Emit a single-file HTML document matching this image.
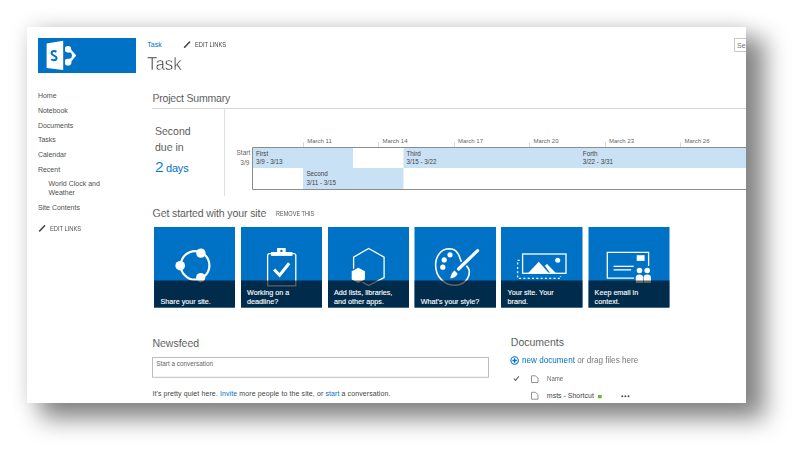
<!DOCTYPE html>
<html><head><meta charset="utf-8">
<style>
html,body{margin:0;padding:0;}
body{width:800px;height:457px;background:#fff;position:relative;overflow:hidden;font-family:"Liberation Sans",sans-serif;color:#444;}
#sh{position:absolute;left:41px;top:38px;width:724px;height:381px;background:rgba(0,0,0,.46);filter:blur(11.5px);}
#page{position:absolute;left:27px;top:27px;width:719px;height:376px;background:#fff;box-shadow:0 0 20px rgba(0,0,0,.11);}
.t{position:absolute;white-space:nowrap;line-height:1;}
.a{position:absolute;}
.nav{font-size:7px;color:#505050;}
.h2{font-size:10.5px;color:#444;-webkit-text-stroke:0.1px #fff;}
.tt{position:absolute;color:#fff;font-weight:normal;font-size:7.2px;line-height:8.8px;white-space:nowrap;letter-spacing:0px;-webkit-text-stroke:0.12px #fff;}
.g{font-size:6px;color:#444;}
svg{position:absolute;left:0;top:0;}
</style></head><body>
<div id="sh"></div>
<div id="page"></div>

<svg width="800" height="457" viewBox="0 0 800 457">
  <!-- logo -->
  <rect x="38" y="38" width="98" height="35" fill="#0072c6"/>
  <path d="M67.8,46 L76.3,55.6 L67.8,65.5 Z" fill="#fff"/>
  <circle cx="68.6" cy="55.6" r="3.3" fill="#0072c6"/>
  <circle cx="68" cy="49.2" r="3.2" fill="#fff"/>
  <circle cx="68" cy="62.2" r="3.4" fill="#fff"/>
  <rect x="63.2" y="40" width="1.8" height="31" fill="#0072c6"/>
  <polygon points="46.6,43.4 63.2,40.8 63.2,70.1 46.6,67.9" fill="#fff"/>
  <path d="M56.4,51.9 C55.6,51.3 54.8,51.1 54,51.1 C52.5,51.1 51.6,52 51.6,53.2 C51.6,55.9 56.6,55.3 56.6,58.1 C56.6,59.5 55.5,60.2 54,60.2 C53,60.2 52,59.9 51.3,59.3" fill="none" stroke="#0072c6" stroke-width="2"/>
  <!-- pencils -->
  <line x1="184.6" y1="47.2" x2="189.6" y2="42" stroke="#444" stroke-width="1.6" stroke-linecap="round"/>
  <line x1="39.6" y1="231" x2="44.6" y2="225.8" stroke="#444" stroke-width="1.6" stroke-linecap="round"/>

  <!-- project summary lines -->
  <rect x="152" y="108" width="594" height="1" fill="#d6d6d6"/>
  <rect x="224" y="109" width="1" height="87" fill="#e0e0e0"/>

  <!-- gantt -->
  <rect x="253" y="148" width="100" height="20" fill="#c9e1f5"/>
  <rect x="303" y="168" width="100.5" height="21" fill="#c9e1f5"/>
  <rect x="403.5" y="148" width="342.5" height="20" fill="#c9e1f5"/>
  <path d="M746 147.5 H252.5 V189.5 H746" fill="none" stroke="#8c8c8c" stroke-width="1"/>
  <g fill="#d9d9d9">
    <rect x="303" y="142" width="1" height="5"/>
    <rect x="378" y="142" width="1" height="5"/>
    <rect x="454" y="142" width="1" height="5"/>
    <rect x="529" y="142" width="1" height="5"/>
    <rect x="605" y="142" width="1" height="5"/>
    <rect x="680" y="142" width="1" height="5"/>
  </g>

  <!-- tiles -->
  <g fill="#0072c6">
    <rect x="154" y="227" width="81" height="80.6"/>
    <rect x="241" y="227" width="81" height="80.6"/>
    <rect x="328" y="227" width="81" height="80.6"/>
    <rect x="414.5" y="227" width="81.5" height="80.6"/>
    <rect x="501" y="227" width="81.5" height="80.6"/>
    <rect x="588.5" y="227" width="81" height="80.6"/>
  </g>
  <!-- icon 1 share -->
  <circle cx="195.1" cy="265.4" r="14.3" fill="none" stroke="#fff" stroke-width="2.2"/>
  <g fill="#fff">
    <circle cx="200.9" cy="253.1" r="4.7"/>
    <circle cx="180.2" cy="265.7" r="4.8"/>
    <circle cx="200.7" cy="277.6" r="4.6"/>
  </g>
  <!-- icon 2 clipboard -->
  <path d="M267.6,285.8 V255.5 Q267.6,253.6 269.5,253.6 H293.8 Q295.8,253.6 295.8,255.5 V285.8 Z" fill="none" stroke="#fff" stroke-width="1.3"/>
  <rect x="271.1" y="252" width="21.3" height="3.9" fill="#fff"/>
  <rect x="277.1" y="248" width="8.6" height="4.5" fill="#fff"/>
  <circle cx="281.4" cy="250.9" r="1.2" fill="#0072c6"/>
  <polyline points="274.1,269.5 279.6,275.2 289.2,263.2" fill="none" stroke="#fff" stroke-width="3"/>
  <!-- icon 3 hexagon -->
  <polygon points="368.7,248.5 384.1,257.1 384.1,277.5 368.7,285.5 353.6,277.5 353.6,257.1" fill="none" stroke="#fff" stroke-width="1.3"/>
  <polygon points="358.3,267 365.6,271 365.6,279.8 358.3,283.8 351,279.8 351,271" fill="#fff" stroke="#0072c6" stroke-width="1.4"/>
  <!-- icon 4 palette -->
  <path d="M457.8,253.6 C456,249.5 452,248.8 448.5,248.8 C440.5,249.2 435.6,257 435.6,265 C435.6,277.5 445,285.3 455,285.3 C463,285.3 469.3,279.5 469.3,271.8 C469.3,265.5 463.5,265 461.3,261.5 C460,259.3 459.8,256 457.8,253.6 Z" fill="none" stroke="#fff" stroke-width="1.6"/>
  <g fill="#fff">
    <circle cx="450" cy="254.8" r="2.6"/>
    <circle cx="444.2" cy="259.9" r="2.6"/>
    <circle cx="442.8" cy="267.2" r="2.6"/>
  </g>
  <line x1="477.6" y1="250.6" x2="458.5" y2="269" stroke="#0072c6" stroke-width="6" stroke-linecap="round"/>
  <line x1="477.6" y1="250.6" x2="458.5" y2="269" stroke="#fff" stroke-width="3.2" stroke-linecap="round"/>
  <path d="M454.5,270.5 L457.5,273.5 C457,276.5 453.5,278.3 450.3,278.3 C450.8,275 452,272 454.5,270.5Z" fill="#fff"/>
  <!-- icon 5 brand -->
  <rect x="522.6" y="254" width="43.4" height="19.3" fill="none" stroke="#fff" stroke-width="1.3"/>
  <polygon points="528.2,273 538.8,261.8 548.7,273" fill="#fff"/>
  <polygon points="544.8,265.8 547.1,264 555.8,273 550.2,273" fill="#fff"/>
  <circle cx="557.7" cy="260.2" r="2.5" fill="#fff"/>
  <path d="M519.6,260.3 H517.6 V278.3 H560.5 V276" fill="none" stroke="#fff" stroke-width="1.3" stroke-dasharray="2,2.3"/>
  <!-- icon 6 email -->
  <path d="M648.6,266.1 V252.3 H607.3 V278.1 H634.1" fill="none" stroke="#fff" stroke-width="1.3"/>
  <rect x="636.7" y="255.2" width="7.9" height="5.7" fill="#fff"/>
  <rect x="613.6" y="265.7" width="20.1" height="1.3" fill="#fff"/>
  <rect x="613.6" y="269.2" width="17.5" height="1.3" fill="#fff"/>
  <g fill="#fff">
    <circle cx="639.5" cy="270.5" r="2.8"/>
    <circle cx="647.2" cy="270.5" r="2.8"/>
    <path d="M635.8,283 V277.5 C635.8,275.5 637.3,274.6 639.5,274.6 C641.7,274.6 643,275.5 643,277.5 V283Z"/>
    <path d="M643.6,283 V277.5 C643.6,275.5 645,274.6 647.2,274.6 C649.4,274.6 650.9,275.5 650.9,277.5 V283Z"/>
  </g>
  <!-- bands -->
  <g fill="rgba(0,0,0,0.62)">
    <rect x="154" y="280.5" width="81" height="27.1"/>
    <rect x="241" y="280.5" width="81" height="27.1"/>
    <rect x="328" y="280.5" width="81" height="27.1"/>
    <rect x="414.5" y="280.5" width="81.5" height="27.1"/>
    <rect x="501" y="280.5" width="81.5" height="27.1"/>
    <rect x="588.5" y="280.5" width="81" height="27.1"/>
  </g>

  <!-- newsfeed box -->
  <rect x="152.5" y="357.5" width="336" height="19.8" fill="none" stroke="#bdbdbd" stroke-width="1"/>

  <!-- documents icons -->
  <circle cx="514.6" cy="360.5" r="3.7" fill="none" stroke="#0072c6" stroke-width="1.1"/>
  <path d="M512.4,360.5 H516.8 M514.6,358.3 V362.7" stroke="#0072c6" stroke-width="1.4"/>
  <polyline points="513.8,378.6 515.6,380.4 518.8,376.4" fill="none" stroke="#666" stroke-width="1.1"/>
  <path d="M531.5,375.8 H535.5 L538,378.3 V382.5 H531.5 Z" fill="none" stroke="#888" stroke-width="0.9"/>
  <path d="M531.5,392.3 H535.5 L538,394.8 V399.2 H531.5 Z" fill="none" stroke="#888" stroke-width="0.9"/>
  <rect x="598" y="395" width="3.7" height="3.3" fill="#6cb33f"/>
  <g fill="#444">
    <circle cx="622.3" cy="396.3" r="0.95"/>
    <circle cx="625.4" cy="396.3" r="0.95"/>
    <circle cx="628.5" cy="396.3" r="0.95"/>
  </g>

  <!-- search -->
  <path d="M746,38.5 H734.5 V51.5 H746" fill="none" stroke="#c6c6c6" stroke-width="1"/>
</svg>


<!-- top header -->
<div class="t" style="left:147.3px;top:41px;font-size:7px;color:#0072c6;">Task</div>
<div class="t" style="left:194.7px;top:41.1px;font-size:7px;color:#444;transform:scaleX(0.82);transform-origin:0 0;">EDIT LINKS</div>
<div class="t" style="left:147px;top:54.2px;font-size:19px;color:#333;-webkit-text-stroke:0.5px #fff;transform:scaleX(0.89);transform-origin:0 0;">Task</div>

<!-- left nav -->
<div class="t nav" style="left:37.9px;top:92.2px;">Home</div>
<div class="t nav" style="left:37.9px;top:106.7px;">Notebook</div>
<div class="t nav" style="left:37.9px;top:121.5px;">Documents</div>
<div class="t nav" style="left:37.9px;top:135.7px;">Tasks</div>
<div class="t nav" style="left:37.9px;top:150.5px;">Calendar</div>
<div class="t nav" style="left:37.9px;top:165.5px;">Recent</div>
<div class="t nav" style="left:48.6px;top:179.8px;">World Clock and</div>
<div class="t nav" style="left:48.6px;top:189.1px;">Weather</div>
<div class="t nav" style="left:37.9px;top:203.9px;">Site Contents</div>
<div class="t nav" style="left:50px;top:225.3px;transform:scaleX(0.82);transform-origin:0 0;">EDIT LINKS</div>

<!-- project summary -->
<div class="t h2" style="left:152.5px;top:93.4px;letter-spacing:-0.2px;">Project Summary</div>
<div class="t h2" style="left:155px;top:126.1px;">Second</div>
<div class="t h2" style="left:155px;top:141.8px;">due in</div>
<div class="t" style="left:155px;top:158.6px;font-size:15.5px;color:#0072c6;-webkit-text-stroke:0.15px #fff;">2</div>
<div class="t" style="left:166px;top:162.8px;font-size:11px;color:#0072c6;letter-spacing:-0.2px;">days</div>

<!-- gantt labels -->
<div class="t g" style="left:236.5px;top:150.3px;font-size:6.5px;color:#666;">Start</div>
<div class="t g" style="left:240.3px;top:159.6px;font-size:6.5px;color:#666;">3/9</div>
<div class="t g" style="left:256px;top:150.6px;font-size:6.3px">First</div>
<div class="t g" style="left:256px;top:159.1px;font-size:6.3px">3/9 - 3/13</div>
<div class="t g" style="left:306.4px;top:171.4px;font-size:6.3px">Second</div>
<div class="t g" style="left:306.4px;top:179.7px;font-size:6.3px">3/11 - 3/15</div>
<div class="t g" style="left:406.5px;top:150.6px;font-size:6.3px">Third</div>
<div class="t g" style="left:406.5px;top:159.1px;font-size:6.3px">3/15 - 3/22</div>
<div class="t g" style="left:582.8px;top:150.6px;font-size:6.3px">Forth</div>
<div class="t g" style="left:582.8px;top:159.1px;font-size:6.3px">3/22 - 3/31</div>
<div class="t g" style="left:307.2px;top:138.2px;color:#666;">March 11</div>
<div class="t g" style="left:382.5px;top:138.2px;color:#666;">March 14</div>
<div class="t g" style="left:458px;top:138.2px;color:#666;">March 17</div>
<div class="t g" style="left:533.5px;top:138.2px;color:#666;">March 20</div>
<div class="t g" style="left:609px;top:138.2px;color:#666;">March 23</div>
<div class="t g" style="left:684.5px;top:138.2px;color:#666;">March 26</div>

<!-- get started -->
<div class="t h2" style="left:152.6px;top:208.1px;letter-spacing:-0.1px;">Get started with your site</div>
<div class="t" style="left:276px;top:211px;font-size:6.5px;color:#555;transform:scaleX(0.855);transform-origin:0 0;">REMOVE THIS</div>
<div class="tt" style="left:160.5px;top:297.6px;">Share your site.</div>
<div class="tt" style="left:247px;top:288.9px;">Working on a<br>deadline?</div>
<div class="tt" style="left:334px;top:288.9px;">Add lists, libraries,<br>and other apps.</div>
<div class="tt" style="left:420.8px;top:297.6px;">What's your style?</div>
<div class="tt" style="left:507.5px;top:288.9px;">Your site. Your<br>brand.</div>
<div class="tt" style="left:594.6px;top:288.9px;">Keep email in<br>context.</div>

<!-- newsfeed -->
<div class="t h2" style="left:152.4px;top:337.9px;">Newsfeed</div>
<div class="t" style="left:156.2px;top:360.8px;font-size:6.4px;color:#666;letter-spacing:0px;">Start a conversation</div>
<div class="t" style="left:152.4px;top:389.5px;font-size:7px;color:#444;letter-spacing:0.1px;">It's pretty quiet here. <span style="color:#0072c6">Invite</span> more people to the site, or <span style="color:#0072c6">start</span> a conversation.</div>

<!-- documents -->
<div class="t h2" style="left:510.8px;top:336.8px;">Documents</div>
<div class="t" style="left:521.8px;top:355.5px;font-size:8.8px;color:#777;transform:scaleX(0.925);transform-origin:0 0;"><span style="color:#0072c6">new document</span> or drag files here</div>
<div class="t" style="left:546.8px;top:376.3px;font-size:6.6px;color:#6a6a6a;transform:scaleX(0.92);transform-origin:0 0;">Name</div>
<div class="t" style="left:546.8px;top:392px;font-size:7px;color:#444;">msts - Shortcut</div>

<!-- search -->
<div class="t" style="left:737px;top:42px;font-size:7px;color:#777;">Se</div>
<!-- right clip cover -->
<div class="a" style="left:746px;top:27px;width:54px;height:376px;background:transparent;"></div>
</body></html>
